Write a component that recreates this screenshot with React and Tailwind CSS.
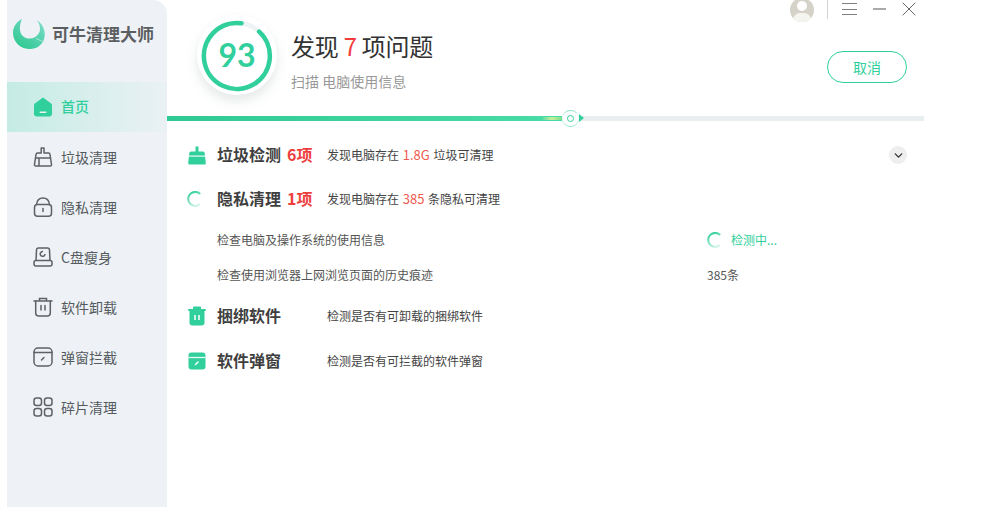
import { ChevronDown, X } from "lucide-react"

const FONT = "font-['Noto_Sans_CJK_SC','Noto_Sans',sans-serif]"

function Logo() {
  return (
    <svg width="34" height="34" viewBox="0 0 34 34" className="shrink-0">
      <defs>
        <linearGradient id="logo-g" x1="0.9" y1="0" x2="0.2" y2="1">
          <stop offset="0" stopColor="#7fdccb" />
          <stop offset="1" stopColor="#2cc88f" />
        </linearGradient>
      </defs>
      <path d="M9 2 C3 5 -0.5 11 0 17 C1 26 8 32 17 32 C24 32 29 28 31 22 C33 16 31 8 24 3 C27 8 28 12 26 16 C23 21 18 22.5 13 21 C8 19 6.5 14 7 10 C7.2 7 8 4 9 2Z" fill="url(#logo-g)" />
      <path d="M23 21.5 L31 25" stroke="#a6e6d4" strokeWidth="1" />
    </svg>
  )
}

function HomeIcon() {
  return (
    <svg width="20" height="20" viewBox="0 0 20 20">
      <path d="M10 0.5 L18.2 6.5 Q19 7.2 19 8.5 V16.5 Q19 19.5 16 19.5 H4 Q1 19.5 1 16.5 V8.5 Q1 7.2 1.8 6.5Z" fill="#30cf9c" />
      <rect x="6.5" y="14.5" width="7" height="1.6" rx="0.8" fill="#eef2f6" />
    </svg>
  )
}

function BroomIcon({ solid }) {
  if (solid) {
    return (
      <svg width="18" height="20" viewBox="0 0 18 20">
        <path d="M7.5 1.5 H10.5 V6.5 H15 Q16.5 6.5 16.7 8 L17.8 18 Q18 19.5 16.5 19.5 H1.5 Q0 19.5 0.2 18 L1.3 8 Q1.5 6.5 3 6.5 H7.5Z" fill="#30cf9c" />
        <rect x="0.5" y="10.5" width="17" height="1.2" fill="#eafaf5" />
      </svg>
    )
  }
  return (
    <svg width="20" height="20" viewBox="0 0 20 20" fill="none" stroke="#5e6266" strokeWidth="1.5" strokeLinejoin="round">
      <path d="M8.2 1 H11 V6 H15.5 Q16.8 6 17 7.5 L18.5 17.5 Q18.7 19 17.2 19 H2.8 Q1.3 19 1.5 17.5 L3 7.5 Q3.2 6 4.5 6 H8.2Z" />
      <path d="M2.5 11 H17.5 M6 19 V11" />
    </svg>
  )
}

function LockIcon() {
  return (
    <svg width="20" height="20" viewBox="0 0 20 20" fill="none" stroke="#5e6266" strokeWidth="1.5" strokeLinecap="round">
      <path d="M3.5 7.5 C4 3.2 6.5 1 10 1 C13.5 1 16 3.2 16.5 7.5" />
      <rect x="1.5" y="7.5" width="17" height="11.7" rx="3" />
      <path d="M10 11.5 V14.5" />
    </svg>
  )
}

function DiskIcon() {
  return (
    <svg width="20" height="20" viewBox="0 0 20 20" fill="none" stroke="#5e6266" strokeWidth="1.5" strokeLinejoin="round">
      <path d="M3 14 L3.5 3 Q3.6 1 5.5 1 H14.5 Q16.4 1 16.5 3 L17 14" />
      <rect x="1" y="13.5" width="18" height="5.5" rx="2" />
      <path d="M12 7 A2.4 2.4 0 1 1 10 4.6" />
    </svg>
  )
}

function TrashIcon({ solid }) {
  if (solid) {
    return (
      <svg width="18" height="20" viewBox="0 0 18 20">
        <path d="M6 0.5 H12 Q13 0.5 13 1.5 V3 H17 Q18 3 18 4 Q18 5 17 5 H16.5 V16.5 Q16.5 19.5 13.5 19.5 H4.5 Q1.5 19.5 1.5 16.5 V5 H1 Q0 5 0 4 Q0 3 1 3 H5 V1.5 Q5 0.5 6 0.5Z" fill="#30cf9c" />
        <path d="M7 9 V14 M11 9 V14" stroke="#fff" strokeWidth="1.5" />
      </svg>
    )
  }
  return (
    <svg width="20" height="20" viewBox="0 0 20 20" fill="none" stroke="#5e6266" strokeWidth="1.5" strokeLinecap="round">
      <path d="M1 4 H19 M6.5 4 V1.5 H13.5 V4" />
      <path d="M2.7 4 V16 Q2.7 19 5.7 19 H14.3 Q17.3 19 17.3 16 V4" />
      <path d="M8 8.5 V13 M12 8.5 V13" />
    </svg>
  )
}

function PopupIcon({ solid }) {
  if (solid) {
    return (
      <svg width="18" height="18" viewBox="0 0 18 18">
        <path d="M3.5 0.5 H14.5 Q17.5 0.5 17.5 3.5 V14.5 Q17.5 17.5 14.5 17.5 H3.5 Q0.5 17.5 0.5 14.5 V3.5 Q0.5 0.5 3.5 0.5Z" fill="#30cf9c" />
        <path d="M0.5 5.5 H17.5" stroke="#eafaf5" strokeWidth="1.3" />
        <path d="M7.5 12.5 L10 10" stroke="#fff" strokeWidth="1.5" strokeLinecap="round" />
      </svg>
    )
  }
  return (
    <svg width="20" height="20" viewBox="0 0 20 20" fill="none" stroke="#5e6266" strokeWidth="1.5" strokeLinecap="round">
      <rect x="1" y="1" width="18" height="18" rx="4" />
      <path d="M1 5.5 H19 M8.5 13 L11 10.5" />
    </svg>
  )
}

function GridIcon() {
  return (
    <svg width="20" height="20" viewBox="0 0 20 20" fill="none" stroke="#5e6266" strokeWidth="1.5">
      <rect x="1" y="1" width="7.5" height="7.5" rx="2.5" />
      <rect x="11.5" y="1" width="7.5" height="7.5" rx="2.5" />
      <rect x="1" y="11.5" width="7.5" height="7.5" rx="2.5" />
      <rect x="11.5" y="11.5" width="7.5" height="7.5" rx="2.5" />
    </svg>
  )
}

function Spinner({ id, className }) {
  return (
    <svg width="16" height="16" viewBox="0 0 16 16" fill="none" className={className}>
      <defs>
        <linearGradient id={id} gradientUnits="userSpaceOnUse" x1="4" y1="1" x2="11" y2="15">
          <stop offset="0" stopColor="#30cf9c" />
          <stop offset="1" stopColor="#30cf9c" stopOpacity="0.2" />
        </linearGradient>
      </defs>
      <path d="M13.2 3 A7 7 0 1 0 13 13" stroke={`url(#${id})`} strokeWidth="2" />
    </svg>
  )
}

function ScoreRing() {
  return (
    <div className="relative w-[80px] h-[80px] rounded-full bg-white shadow-[0_6px_12px_rgba(90,120,110,0.16)] flex items-center justify-center">
      <svg width="80" height="80" viewBox="0 0 80 80" fill="none" className="absolute inset-0">
        <circle cx="40" cy="41" r="33" stroke="#eef3f5" strokeWidth="4.5" />
        <path d="M62.1 16.6 A33 33 0 1 1 44.5 8.3" stroke="#30cf9c" strokeWidth="4.5" strokeLinecap="round" />
      </svg>
      <span className="relative text-[32px] leading-none font-bold text-[#30cf9c] font-['Lato',sans-serif]">93</span>
    </div>
  )
}

const NAV = [
  { label: "首页", icon: <HomeIcon />, active: true },
  { label: "垃圾清理", icon: <BroomIcon /> },
  { label: "隐私清理", icon: <LockIcon /> },
  { label: "C盘瘦身", icon: <DiskIcon /> },
  { label: "软件卸载", icon: <TrashIcon /> },
  { label: "弹窗拦截", icon: <PopupIcon /> },
  { label: "碎片清理", icon: <GridIcon /> },
]

function Sidebar() {
  return (
    <aside className="w-[160px] shrink-0 h-full bg-[#eef2f6] rounded-tr-[14px]">
      <div className="h-[82px] flex items-start pt-[17px] pl-[6px] gap-[5px]">
        <Logo />
        <span className="text-[17px] leading-[34px] font-bold text-[#5c5f61]">可牛清理大师</span>
      </div>
      {NAV.map(({ label, icon, active }) => (
        <div
          key={label}
          className={`h-[50px] flex items-center pl-[26px] ${active ? "bg-gradient-to-r from-[#c4ece4] to-[#eaf1f4]" : ""}`}
        >
          <span className="w-[28px] shrink-0">{icon}</span>
          <span className={`text-[14px] ${active ? "text-[#30cf9c] font-medium pb-[2px]" : "text-[#555a5e]"}`}>{label}</span>
        </div>
      ))}
    </aside>
  )
}

function Header() {
  return (
    <div className="h-[115px] flex items-start">
      <div className="ml-[30px] mt-[15px]">
        <ScoreRing />
      </div>
      <div className="ml-[14px] mt-[28px]">
        <h1 className="text-[24px] leading-[36px] text-[#333] whitespace-pre tracking-[-0.25px]">
          发现 <span className="text-[#f23b3b]">7</span> 项问题
        </h1>
        <p className="mt-[7px] text-[14px] leading-[20px] text-[#999]">扫描 电脑使用信息</p>
      </div>
      <div className="flex-1 flex flex-col items-end">
        <div className="h-[22px] flex items-start pr-[3px]">
          <div className="relative w-[24px] h-[24px] -mt-[2px] rounded-full bg-[#d5d3c9] overflow-hidden">
            <div className="absolute left-[7px] top-[3px] w-[10px] h-[10px] rounded-full bg-white" />
            <div className="absolute left-[3px] top-[15px] w-[18px] h-[14px] rounded-full bg-[#f5f5f0]" />
          </div>
          <div className="ml-[13px] w-px h-[19px] bg-[#cfd2d2]" />
          <div className="ml-[14px] mt-[3px] w-[15px] flex flex-col gap-[4.5px]">
            <div className="h-px bg-[#808080]" />
            <div className="h-px bg-[#808080]" />
            <div className="h-px bg-[#808080]" />
          </div>
          <div className="ml-[16px] mt-[8px] w-[13px] h-[2px] bg-[#aaa]" />
          <X size={24} strokeWidth={1} className="ml-[11px] -mt-[3px] text-[#666]" />
        </div>
        <button className="mt-[29px] mr-[17px] w-[80px] h-[32px] rounded-full border border-[#30cf9c] text-[14px] text-[#30cf9c] bg-white">
          取消
        </button>
      </div>
    </div>
  )
}

function Progress() {
  return (
    <div className="relative h-[5px] mt-px bg-[#e9eef1]">
      <div className="h-full w-[395px] bg-gradient-to-r from-[#2fc994] to-[#48dca6]" />
      <div className="absolute left-[375px] top-px w-[20px] h-[3px] bg-gradient-to-r from-[#48dca6] via-[#c9ee9a] to-[#6fe08f] rounded-l-full" />
      <div className="absolute left-[395px] -top-[6px] w-[17px] h-[17px] rounded-full bg-white border-y-[1.5px] border-y-[#8fe4c8] flex items-center justify-center">
        <div className="w-[7px] h-[7px] rounded-full border-[1.5px] border-[#30cf9c]" />
      </div>
      <div className="absolute left-[412px] -top-[2px] w-0 h-0 border-y-[4.5px] border-y-transparent border-l-[5px] border-l-[#30cf9c]" />
    </div>
  )
}

function Row({ icon, title, count, height, children, right }) {
  return (
    <div className={`flex items-center ${height}`}>
      <span className="w-[20px] ml-[20px] shrink-0 flex justify-center">{icon}</span>
      <span className="ml-[10px] w-[64px] pb-[2px] text-[16px] font-bold text-[#3f3f3f] shrink-0">{title}</span>
      <span className="ml-[6px] w-[40px] pb-[2px] text-[16px] font-bold text-[#ee3f3f] shrink-0">{count}</span>
      <span className="text-[12px] text-[#444] whitespace-pre">{children}</span>
      {right}
    </div>
  )
}

function SubRow({ text, height, children }) {
  return (
    <div className={`flex items-center pl-[50px] text-[12px] text-[#555] ${height}`}>
      <span className="w-[490px]">{text}</span>
      {children}
    </div>
  )
}

export default function App() {
  return (
    <div className={`w-[994px] h-[507px] overflow-hidden bg-white flex pl-[7px] ${FONT}`}>
      <Sidebar />
      <main className="w-[757px] shrink-0">
        <Header />
        <Progress />
        <div className="mt-[12px]">
          <Row
            height="h-[44px]"
            icon={<BroomIcon solid />}
            title="垃圾检测"
            count="6项"
            right={
              <span className="ml-auto mr-[17px] w-[18px] h-[18px] rounded-full bg-[#eeeeee] flex items-center justify-center">
                <ChevronDown size={13} strokeWidth={2.5} className="text-[#333]" />
              </span>
            }
          >
            发现电脑存在 <span className="text-[13px] ml-px mr-[1px] text-[#ee5a4f]">1.8G</span> 垃圾可清理
          </Row>
          <Row height="h-[44px]" icon={<Spinner id="spin-a" className="mr-[4px]" />} title="隐私清理" count="1项">
            发现电脑存在 <span className="text-[13px] ml-px mr-[1px] text-[#ee5a4f]">385</span> 条隐私可清理
          </Row>
          <SubRow height="h-[38px]" text="检查电脑及操作系统的使用信息">
            <Spinner id="spin-b" />
            <span className="ml-[8px] text-[#30cf9c]">检测中...</span>
          </SubRow>
          <SubRow height="h-[32px]" text="检查使用浏览器上网浏览页面的历史痕迹">
            <span>385条</span>
          </SubRow>
          <Row height="h-[50px]" icon={<TrashIcon solid />} title="捆绑软件" count="">
            检测是否有可卸载的捆绑软件
          </Row>
          <Row height="h-[40px]" icon={<PopupIcon solid />} title="软件弹窗" count="">
            检测是否有可拦截的软件弹窗
          </Row>
        </div>
      </main>
    </div>
  )
}
